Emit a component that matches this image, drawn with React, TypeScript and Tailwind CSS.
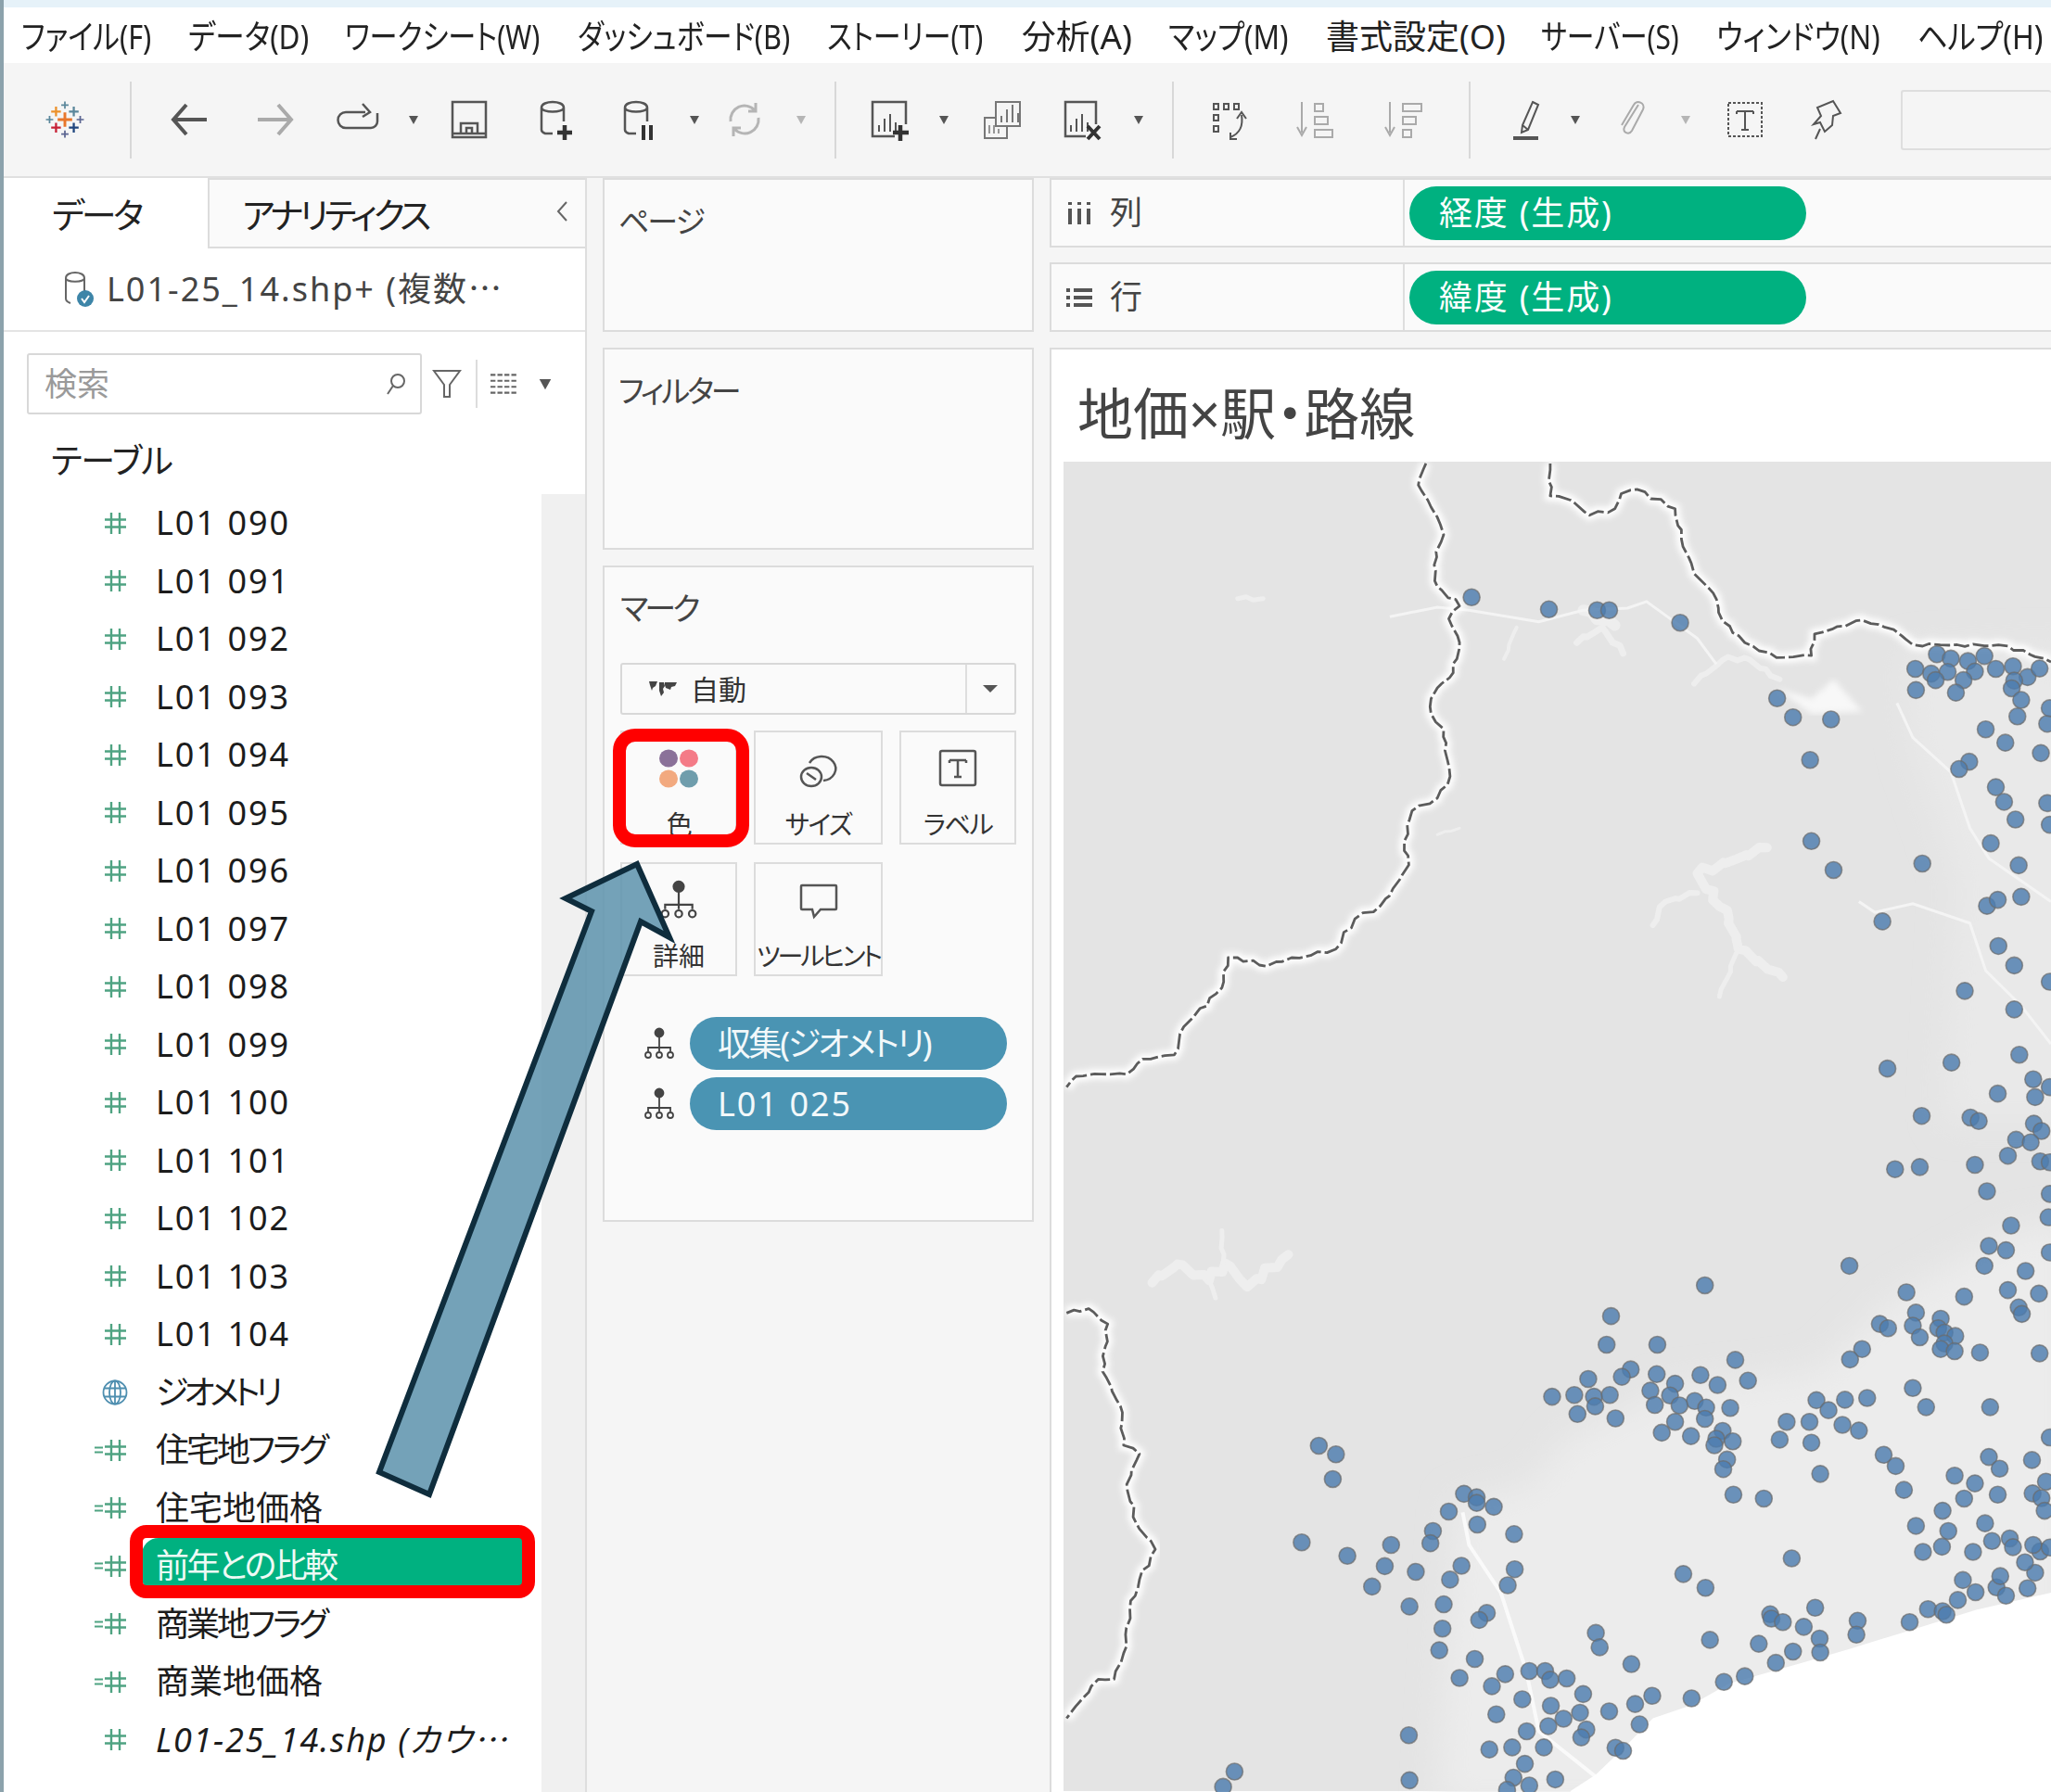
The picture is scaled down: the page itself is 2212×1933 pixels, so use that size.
import type { ReactNode } from 'react';

const menus = [
  { label: 'ファイル(F)', w: 'w-[180px]', sx: 'scale-x-[0.85]' },
  { label: 'データ(D)', w: 'w-[169px]', sx: 'scale-x-[0.876]' },
  { label: 'ワークシート(W)', w: 'w-[251px]', sx: 'scale-x-[0.837]' },
  { label: 'ダッシュボード(B)', w: 'w-[269px]', sx: 'scale-x-[0.853]' },
  { label: 'ストーリー(T)', w: 'w-[210px]', sx: 'scale-x-[0.832]' },
  { label: '分析(A)', w: 'w-[158px]', sx: 'scale-x-[1.02]' },
  { label: 'マップ(M)', w: 'w-[170px]', sx: 'scale-x-[0.876]' },
  { label: '書式設定(O)', w: 'w-[232px]', sx: 'scale-x-[1]' },
  { label: 'サーバー(S)', w: 'w-[189px]', sx: 'scale-x-[0.827]' },
  { label: 'ウィンドウ(N)', w: 'w-[217px]', sx: 'scale-x-[0.874]' },
  { label: 'ヘルプ(H)', w: 'w-[130px]', sx: 'scale-x-[0.894]' },
];

const Ico = ({ children, className = '', color = '#555', sw = 2.5 }: { children: ReactNode; className?: string; color?: string; sw?: number }) => (
  <svg viewBox="0 0 48 48" className={`w-[48px] h-[48px] shrink-0 ${className}`} fill="none" stroke={color} strokeWidth={sw}>
    {children}
  </svg>
);

const Tri = ({ className = '', dim = false }: { className?: string; dim?: boolean }) => (
  <svg viewBox="0 0 16 16" className={`w-[16px] h-[16px] shrink-0 ${className}`}>
    <path d="M3 4h10l-5 9z" fill={dim ? '#b5b5b5' : '#555'} />
  </svg>
);

const Sep = ({ className = '' }: { className?: string }) => <div className={`w-[2px] h-[83px] bg-[#d8d8d8] shrink-0 ${className}`} />;

const Logo = ({ className = '' }: { className?: string }) => {
  const crosses: [number, number, number, string, number][] = [
    [24, 24, 9, '#e8762b', 3.4],
    [24, 6, 4.5, '#5b879b', 2],
    [24, 42, 4.5, '#5b6591', 2],
    [5, 24, 4.5, '#59879b', 2],
    [43, 24, 4.5, '#5b6591', 2],
    [13, 14, 6, '#eb912b', 2.6],
    [35, 14, 6, '#5b879b', 2.6],
    [13, 34, 6, '#c72035', 2.6],
    [35, 34, 6, '#1f457e', 2.6],
  ];
  return (
    <Ico className={className}>
      {crosses.map(([x, y, r, c, w], i) => (
        <path key={i} d={`M${x - r} ${y}h${r * 2}M${x} ${y - r}v${r * 2}`} stroke={c} strokeWidth={w} />
      ))}
    </Ico>
  );
};

const Cyl = () => <path d="M8 11c0-8 24-8 24 0v15M8 11c0 6 24 6 24 0M8 11v24c0 2 1 3 4 4h8" />;

const Bars = ({ x, y }: { x: number; y: number }) => (
  <path d={`M${x} ${y}v-7M${x + 6} ${y}v-14M${x + 12} ${y}v-19M${x + 18} ${y}v-10`} strokeWidth="2" />
);

function Toolbar() {
  return (
    <div className="h-[124px] bg-[#f5f5f5] flex items-center border-b-2 border-[#e0e0e0] shrink-0">
      <Logo className="ml-[42px] scale-[0.87]" />
      <Sep className="ml-[46px]" />
      <Ico className="ml-[38px]" sw={4}><path d="M43 24H8M21 8 7 24l14 16" /></Ico>
      <Ico className="ml-[45px]" color="#aaa" sw={4}><path d="M5 24h35M27 8l14 16-14 16" /></Ico>
      <Ico className="ml-[41px]"><path d="M32 16H11a8 8 0 0 0 0 17h27a7 7 0 0 0 7-7V17M29 7l8 9-8 5" /></Ico>
      <Tri className="ml-[28px]" />
      <Ico className="ml-[28px]"><path d="M6 5h36v38H6zM6 39h36M15 39V28h18v11M21 39v-6h6v6" /></Ico>
      <Ico className="ml-[46px]"><Cyl /><path d="M33 30v16M25 38h16" stroke="#333" strokeWidth="4.5" /></Ico>
      <Ico className="ml-[42px]"><Cyl /><path d="M28 30v16M36 30v16" stroke="#333" strokeWidth="4" /></Ico>
      <Tri className="ml-[27px]" />
      <Ico className="ml-[22px]" color="#b5b5b5" sw={3}><path d="M9 26a15 15 0 0 1 26-12M39 22a15 15 0 0 1-26 12M36 6v9h-8M12 42v-9h8" /></Ico>
      <Tri className="ml-[29px]" dim />
      <Sep className="ml-[28px]" />
      <Ico className="ml-[33px]"><path d="M30 42H6V5h36v24" /><Bars x={13} y={37} /><path d="M36 30v17M28 38h17" stroke="#333" strokeWidth="4.5" /></Ico>
      <Tri className="ml-[27px]" />
      <Ico className="ml-[30px]" color="#777" sw={2}><path d="M18 5h26v26H18zM18 22H6v22h24V31" /><Bars x={24} y={27} /><path d="M11 30v9M16 30v9M21 34v5" strokeWidth="1.5" /></Ico>
      <Ico className="ml-[39px]"><path d="M28 42H6V5h33v24" /><Bars x={12} y={37} /><path d="M30 31l13 14M43 31 30 45" stroke="#333" strokeWidth="4" /></Ico>
      <Tri className="ml-[29px]" />
      <Sep className="ml-[28px]" />
      <Ico className="ml-[35px]" sw={2}>
        <path d="M8 7h5v6H8zM19 7h5v6h-5zM30 7h5v6h-5zM8 19h5v6H8zM8 31h5v6H8z" />
        <path d="M38 19c2 12-2 20-12 24M26 38v7h7M33 23l5-7 5 7" />
      </Ico>
      <Ico className="ml-[47px]" color="#aaa" sw={2}><path d="M8 5v33M3 32l5 9 5-9M22 7h9v8h-9zM22 21h14v8H22zM22 35h19v8H22z" /></Ico>
      <Ico className="ml-[47px]" color="#aaa" sw={2}><path d="M8 5v33M3 32l5 9 5-9M22 7h20v8H22zM22 21h14v8H22zM22 35h9v8h-9z" /></Ico>
      <Sep className="ml-[45px]" />
      <Ico className="ml-[37px]" sw={2}>
        <path d="M30 5l6 3-11 27-7 3 1-8zM19 30l6 5" />
        <rect x="9" y="42" width="27" height="4" fill="#555" stroke="none" />
      </Ico>
      <Tri className="ml-[20px]" />
      <Ico className="ml-[27px]" color="#aaa" sw={2}><path d="M33 8 18 32c-3 6 5 9 8 4l12-23c3-7-7-11-10-5L15 30" /></Ico>
      <Tri className="ml-[28px]" dim />
      <Ico className="ml-[32px]" sw={2}>
        <rect x="6" y="6" width="36" height="36" strokeDasharray="3 2" />
        <path d="M15 15h18M24 15v20M20 35h8M15 15v3M33 15v3" />
      </Ico>
      <Ico className="ml-[40px]" sw={2}><path d="M31 4l8 13-8 3-1 10-8 7-5-10-7 2 8-9-4-9zM17 34l-5 11" /></Ico>
      <div className="ml-[56px] flex-1 h-[65px] border-2 border-[#dedede] rounded-[3px] border-r-0" />
    </div>
  );
}

const Hash = () => (
  <svg viewBox="0 0 25 25" className="w-[25px] h-[25px]" stroke="#4fa382" strokeWidth="2.4" fill="none">
    <path d="M8 1v23M17 1v23M1 8.500h23M1 16.500h23" />
  </svg>
);

const Equal = () => (
  <svg viewBox="0 0 9 10" className="w-[9px] h-[10px] absolute left-[98px]" stroke="#4fa382" strokeWidth="2.200">
    <path d="M0 2.500h9M0 7.500h9" />
  </svg>
);

const Globe = () => (
  <svg viewBox="0 0 28 28" className="w-[28px] h-[28px]" stroke="#4f8fb0" strokeWidth="1.800" fill="none">
    <circle cx="14" cy="14" r="12.500" />
    <ellipse cx="14" cy="14" rx="6" ry="12.500" />
    <path d="M14 1.500v25M2 9.500h24M2 18.500h24" />
  </svg>
);

type Field = { name: string; kind: 'num' | 'calc' | 'geo'; tr: string; italic?: boolean; selected?: boolean };

const fields: Field[] = [
  ...['090', '091', '092', '093', '094', '095', '096', '097', '098', '099', '100', '101', '102', '103', '104'].map((n) => ({
    name: `L01 ${n}`,
    kind: 'num' as const,
    tr: 'tracking-[2px]',
  })),
  { name: 'ジオメトリ', kind: 'geo', tr: 'tracking-[-5px]' },
  { name: '住宅地フラグ', kind: 'calc', tr: 'tracking-[-3px]' },
  { name: '住宅地価格', kind: 'calc', tr: '' },
  { name: '前年との比較', kind: 'calc', tr: 'tracking-[-2.600px]', selected: true },
  { name: '商業地フラグ', kind: 'calc', tr: 'tracking-[-3px]' },
  { name: '商業地価格', kind: 'calc', tr: '' },
  { name: 'L01-25_14.shp (カウ⋯', kind: 'num', tr: 'tracking-[1.700px]', italic: true },
];

function FieldRow({ f }: { f: Field }) {
  return (
    <div className="relative h-[62.5px] flex items-center">
      {f.kind === 'calc' && <Equal />}
      <div className="absolute left-[105px] w-[30px] h-full flex items-center justify-center">{f.kind === 'geo' ? <Globe /> : <Hash />}</div>
      <div
        className={`absolute left-[149px] right-[17px] flex items-center pl-[15px] whitespace-nowrap ${
          f.selected ? 'h-[60px] bg-[#00b180] text-[#eefaf5] rounded-l-[18px]' : 'h-[51px] text-[#1c1c1c]'
        } ${f.italic ? 'italic' : ''} ${f.tr} text-[36px]`}
      >
        {f.name}
      </div>
    </div>
  );
}

function DataPanel() {
  return (
    <div className="w-[629px] shrink-0 bg-white border-r-2 border-[#dedede] flex flex-col">
      <div className="h-[76px] flex shrink-0">
        <div className="w-[220px] pl-[52px] pt-[3px] flex items-center text-[38px] text-[#222] tracking-[-3.500px]">データ</div>
        <div className="flex-1 bg-[#fafafa] border-l-2 border-t-2 border-b-2 border-[#dcdcdc] flex items-center pl-[35px] pt-[3px] text-[38px] text-[#222] tracking-[-4.400px]">
          アナリティクス
          <svg viewBox="0 0 14 24" className="w-[14px] h-[24px] ml-auto mr-[18px] -mt-[8px]" fill="none" stroke="#666" strokeWidth="2">
            <path d="M12 2 3 12l9 10" />
          </svg>
        </div>
      </div>
      <div className="h-[90px] shrink-0 flex items-center border-b-2 border-[#e4e4e4] pl-[64px] text-[36px] text-[#444] tracking-[2px]">
        <svg viewBox="0 0 36 40" className="w-[36px] h-[40px] mr-[11px]" fill="none" stroke="#666" strokeWidth="2">
          <path d="M3 8c0-8 20-8 20 0v14M3 8c0 5 20 5 20 0M3 8v22c0 3 2 4 5 5" />
          <circle cx="24" cy="30" r="9" fill="#3d85a8" stroke="none" />
          <path d="M20 30l3 4 5-7" stroke="#fff" />
        </svg>
        L01-25_14.shp+ (複数⋯
      </div>
      <div className="h-[112px] shrink-0 flex items-center pl-[25px]">
        <div className="w-[426px] h-[66px] border-2 border-[#d8d8d8] rounded-[3px] flex items-center justify-between pl-[17px] pr-[14px] text-[35px] text-[#9a9a9a]">
          検索
          <svg viewBox="0 0 24 28" className="w-[24px] h-[28px]" fill="none" stroke="#666" strokeWidth="2">
            <circle cx="14" cy="11" r="7" />
            <path d="M9 16 3 25" />
          </svg>
        </div>
        <svg viewBox="0 0 32 34" className="w-[32px] h-[34px] ml-[11px]" fill="none" stroke="#666" strokeWidth="2">
          <path d="M2 3h28L19 18v13h-6V18z" />
        </svg>
        <div className="w-[2px] h-[52px] bg-[#dcdcdc] ml-[15px]" />
        <svg viewBox="0 0 28 24" className="w-[30px] h-[26px] ml-[14px]" stroke="#666" strokeWidth="2" strokeDasharray="5 2">
          <path d="M0 3h28M0 9h28M0 15h28M0 21h28" />
        </svg>
        <Tri className="ml-[19px] w-[20px] h-[20px]" />
      </div>
      <div className="h-[63px] shrink-0 flex items-center pl-[51px] pb-[9px] text-[37px] text-[#222] tracking-[-1px]">テーブル</div>
      <div className="flex-1 flex min-h-0">
        <div className="flex-1">
          {fields.map((f) => (
            <FieldRow key={f.name} f={f} />
          ))}
        </div>
        <div className="w-[47px] bg-[#f0f0f0]" />
      </div>
    </div>
  );
}

const Tree = ({ className = '', s = 'w-[36px] h-[36px]' }: { className?: string; s?: string }) => (
  <svg viewBox="0 0 36 36" className={`${s} shrink-0 ${className}`} fill="none" stroke="#444" strokeWidth="1.800">
    <circle cx="18" cy="6" r="4.500" fill="#444" />
    <path d="M18 10v12M6 26v-4h24v4M18 22v4" />
    <circle cx="6" cy="30" r="3" />
    <circle cx="18" cy="30" r="3" />
    <circle cx="30" cy="30" r="3" />
  </svg>
);

const MarkBtn = ({ label, w, icon, tr = 'tracking-[-1.500px]' }: { label: string; w: string; icon: ReactNode; tr?: string }) => (
  <div className={`${w} h-[123px] border-2 border-[#dcdcdc] flex flex-col items-center justify-start pt-[14px]`}>
    <div className="h-[50px] flex items-center justify-center">{icon}</div>
    <div className={`text-[28px] leading-[36px] mt-[17px] text-[#333] whitespace-nowrap ${tr}`}>{label}</div>
  </div>
);

function MiddleColumn() {
  return (
    <div className="w-[465px] shrink-0 ml-[17px] flex flex-col gap-[17px]">
      <div className="h-[166px] border-2 border-[#dcdcdc] bg-[#fafafa] pl-[15px] pt-[20px] text-[33px] text-[#444] tracking-[-2px]">ページ</div>
      <div className="h-[218px] border-2 border-[#dcdcdc] bg-[#fafafa] pl-[15px] pt-[20px] text-[33px] text-[#444] tracking-[-3px]">フィルター</div>
      <div className="h-[708px] border-2 border-[#dcdcdc] bg-[#fafafa] px-[17px] flex flex-col">
        <div className="h-[103px] shrink-0 flex items-start pt-[19px] text-[34px] text-[#444] tracking-[-4px]">マーク</div>
        <div className="h-[56px] w-[427px] border-2 border-[#d8d8d8] rounded-[3px] flex items-center shrink-0">
          <svg viewBox="0 0 32 20" className="w-[32px] h-[20px] ml-[28px]" fill="#444">
            <path d="M1 2h9l-2 5-3 2-1 3-2-6zM12 3h5l1 4-2 3 1 4-3 4-2-6zM18 3h13l-2 4-4 1-1 3-5-2-1-3z" />
          </svg>
          <span className="ml-[14px] text-[30px] text-[#333]">自動</span>
          <div className="w-[2px] h-full bg-[#dedede] ml-[236px]" />
          <svg viewBox="0 0 18 10" className="w-[18px] h-[10px] ml-[16px]"><path d="M1 1h16l-8 8z" fill="#555" /></svg>
        </div>
        <div className="flex gap-[18px] mt-[17px] shrink-0">
          <MarkBtn
            label="色"
            w="w-[126px]"
            icon={
              <svg viewBox="0 0 44 44" className="w-[44px] h-[44px]">
                <ellipse cx="11" cy="11" rx="10" ry="9.500" fill="#8a7199" />
                <ellipse cx="33" cy="11" rx="10" ry="9.500" fill="#f47b87" />
                <ellipse cx="11" cy="33" rx="10" ry="9.500" fill="#f2a97f" />
                <ellipse cx="33" cy="33" rx="10" ry="9.500" fill="#6f9dac" />
              </svg>
            }
          />
          <MarkBtn
            label="サイズ"
            w="w-[139px]"
            icon={
              <svg viewBox="0 0 44 44" className="w-[44px] h-[44px]" fill="none" stroke="#555" strokeWidth="2.500">
                <path d="M12 16a15 13 0 1 1 15 19" />
                <ellipse cx="14" cy="31" rx="11" ry="10" />
                <path d="M9 27l10 7" />
              </svg>
            }
          />
          <MarkBtn
            label="ラベル"
            w="w-[126px]"
            icon={
              <svg viewBox="0 0 44 44" className="w-[44px] h-[44px]" fill="none" stroke="#555" strokeWidth="2.500">
                <rect x="3" y="3" width="38" height="37" rx="2" />
                <path d="M13 13h18M22 13v18M18 31h8M13 13v3M31 13v3" />
              </svg>
            }
          />
        </div>
        <div className="flex gap-[18px] mt-[19px] shrink-0">
          <MarkBtn label="詳細" w="w-[126px]" tr="" icon={<Tree s="w-[44px] h-[44px]" />} />
          <MarkBtn
            label="ツールヒント"
            w="w-[139px]"
            tr="tracking-[-3px]"
            icon={
              <svg viewBox="0 0 44 44" className="w-[44px] h-[44px]" fill="none" stroke="#555" strokeWidth="2.500">
                <path d="M4 6h36a1 1 0 0 1 1 1v24a1 1 0 0 1-1 1H24l-7 8-2-8H4a1 1 0 0 1-1-1V7a1 1 0 0 1 1-1z" />
              </svg>
            }
          />
        </div>
        <div className="flex items-center mt-[44px] shrink-0 pl-[24px]">
          <Tree />
          <div className="ml-[15px] w-[342px] h-[57px] rounded-full bg-[#4a94b3] text-[#f2f8fa] text-[36px] tracking-[-2.400px] flex items-center pl-[30px] whitespace-nowrap">収集(ジオメトリ)</div>
        </div>
        <div className="flex items-center mt-[8px] shrink-0 pl-[24px]">
          <Tree />
          <div className="ml-[15px] w-[342px] h-[57px] rounded-full bg-[#4a94b3] text-[#f2f8fa] text-[36px] tracking-[2px] flex items-center pl-[30px]">L01 025</div>
        </div>
      </div>
    </div>
  );
}

const Shelf = ({ icon, label, pill }: { icon: ReactNode; label: string; pill: string }) => (
  <div className="h-[75px] border-t-2 border-b-2 border-l-2 border-[#dcdcdc] bg-[#fafafa] flex items-center">
    <div className="w-[381px] h-full flex items-center pl-[16px] border-r-2 border-[#dedede] text-[35px] text-[#444]">
      {icon}
      <span className="ml-[19px]">{label}</span>
    </div>
    <div className="ml-[5px] w-[428px] h-[58px] rounded-full bg-[#00b180] text-white text-[36px] tracking-[1.800px] flex items-center pl-[32px]">{pill}</div>
  </div>
);

// 参照画像の拡大図の座標 → ページ座標
const z5 = ([x, y]: number[]) => [1140 + x / 1.4627, 480 + y / 2.148];
const z6 = ([x, y]: number[]) => [1140 + x / 1.4627, 1200 + y / 2.139];
const line = (pts: number[][], f: (p: number[]) => number[]) =>
  pts
    .map(f)
    .map(([x, y], i) => `${i ? 'L' : 'M'}${x.toFixed(1)} ${y.toFixed(1)}`)
    .join('');

// 県境のがたつき: 線分を細かく割って少しずらす
const wobble = (pts: number[][], f: (p: number[]) => number[], amp = 1.8) => {
  const page = pts.map(f);
  const out: number[][] = [];
  page.forEach((p, i) => {
    if (i === 0) {
      out.push(p);
      return;
    }
    const q = page[i - 1];
    const n = Math.max(1, Math.round(Math.hypot(p[0] - q[0], p[1] - q[1]) / 9));
    for (let k = 1; k <= n; k++) {
      const t = k / n;
      const a = i * 7.3 + k * 2.1;
      const j = k === n ? 0 : amp;
      out.push([q[0] + (p[0] - q[0]) * t + Math.sin(a) * j, q[1] + (p[1] - q[1]) * t + Math.cos(a * 1.7) * j]);
    }
  });
  return line(out, (p) => p);
};

const dots5 = [[654,355],[776,383],[852,385],[871,385],[983,414],[1136,589],[1161,633],[1221,638],[1188,732],[1354,521],[1355,570],[1379,532],[1388,487],[1410,497],[1405,528],[1386,547],[1437,503],[1448,527],[1430,547],[1418,576],[1463,491],[1481,521],[1508,515],[1531,540],[1550,520],[1510,548],[1506,566],[1521,593],[1515,631],[1562,648],[1566,612],[1465,661],[1496,692],[1552,716],[1439,736],[1423,753],[1481,795],[1494,829],[1562,832],[1512,870],[1566,882],[1473,925],[1517,976],[1190,920],[1225,987],[1365,972],[1302,1106],[1467,1070],[1484,1056],[1521,1049],[1485,1163],[1510,1208],[1566,1246],[1432,1267],[1510,1310],[1518,1415],[1411,1433],[1310,1447],[1540,1472],[1566,1490],[1484,1505],[1543,1513]];

const dots6 = [[1364,10],[1441,14],[1454,22],[1541,28],[1553,45],[1513,65],[1536,71],[1500,102],[1551,115],[1566,117],[1448,123],[1361,128],[1322,133],[1467,184],[1566,190],[1564,244],[1505,263],[1470,310],[1497,320],[1566,325],[1463,356],[1528,368],[1250,356],[1500,412],[1549,420],[1431,427],[1340,417],[1022,401],[874,472],[1517,452],[1522,467],[1355,464],[1394,478],[1298,490],[1311,500],[1350,494],[1390,500],[1400,510],[1361,521],[1417,518],[1400,535],[1394,548],[1416,553],[1456,556],[1550,558],[1270,548],[1251,572],[867,538],[947,538],[1070,573],[905,595],[891,612],[838,617],[946,606],[1015,608],[1090,621],[975,628],[1042,631],[936,644],[816,654],[847,658],[872,654],[781,658],[849,680],[967,655],[1006,668],[982,678],[943,677],[1024,683],[1062,684],[821,698],[881,708],[1022,709],[975,716],[1350,638],[1371,682],[1472,682],[1198,666],[1243,665],[1278,661],[1217,689],[1151,716],[1187,716],[1239,723],[1265,736],[1140,757],[1190,764],[954,741],[1000,749],[1050,737],[1040,755],[1066,761],[1037,770],[1057,803],[1051,825],[1204,836],[1304,792],[1323,818],[1566,752],[1470,797],[1487,824],[1538,804],[1416,840],[1448,858],[1336,873],[1431,893],[1484,884],[1539,881],[1553,892],[1560,854],[1558,921],[1067,884],[1115,893],[413,771],[440,791],[435,848],[642,882],[662,890],[662,903],[689,912],[618,923],[663,953],[593,968],[721,975],[589,996],[386,994],[527,1000],[458,1025],[638,1048],[517,1049],[566,1062],[722,1056],[620,1080],[711,1093],[497,1096],[556,1142],[610,1137],[678,1157],[666,1173],[608,1193],[603,1243],[659,1263],[635,1307],[707,1298],[745,1291],[770,1291],[778,1311],[804,1308],[686,1326],[830,1344],[734,1356],[779,1371],[871,1384],[912,1367],[939,1348],[1001,1354],[693,1391],[825,1387],[799,1401],[775,1418],[835,1426],[741,1430],[827,1444],[919,1414],[718,1467],[768,1467],[682,1472],[881,1468],[893,1475],[738,1505],[720,1537],[786,1541],[555,1439],[556,1543],[280,1523],[262,1558],[745,1555],[710,1565],[850,1203],[856,1236],[906,1275],[1030,1219],[988,1067],[1023,1099],[1159,1031],[1125,1160],[1127,1170],[1145,1178],[1178,1189],[1196,1145],[1263,1175],[1261,1207],[1203,1216],[1204,1248],[1161,1246],[1107,1228],[1134,1272],[1085,1303],[1052,1316],[1345,1178],[1374,1148],[1397,1153],[1403,1161],[1421,1127],[1429,1081],[1449,1109],[1482,1098],[1488,1072],[1497,1117],[1531,1100],[1543,1064],[1527,1040],[1551,1015],[1540,1000],[1566,1006],[1503,985],[1508,1005],[1475,991],[1464,950],[1445,1016],[1397,921],[1355,956],[1406,968],[1396,1004],[1366,1016]];

const borders = [
  wobble([[582,45],[570,95],[585,130],[600,170],[610,210],[598,250],[595,280],[600,330],[635,375],[618,405],[635,460],[625,530],[600,565],[590,590],[590,625],[610,660],[612,710],[620,770],[600,820],[560,850],[548,920],[555,975],[530,1030],[510,1070],[470,1100],[440,1170],[400,1185],[370,1190],[330,1210],[285,1190],[270,1190],[260,1260],[200,1350],[185,1415],[135,1425],[110,1460],[70,1460],[30,1465],[15,1490]], z5),
  wobble([[778,45],[778,120],[810,130],[840,165],[880,150],[890,115],[915,105],[975,150],[985,220],[1005,300],[1035,345],[1050,410],[1085,460],[1135,495],[1190,490],[1195,440],[1270,408],[1320,430],[1350,465],[1420,465],[1500,468],[1568,505]], z5),
  wobble([[15,465],[50,455],[80,490],[72,600],[100,680],[105,770],[130,790],[110,860],[125,950],[155,1010],[130,1080],[115,1150],[105,1250],[90,1310],[65,1310],[15,1400]], z6),
];

const rivers = [
  line([[525,400],[600,378],[650,385],[760,412],[830,385],[900,380],[930,365],[1010,450],[1040,510]], z5),
  line([[1325,600],[1350,680],[1410,760],[1440,890],[1470,960],[1568,1060]], z5),
  line([[1265,1060],[1290,1085],[1350,1065],[1440,1110],[1465,1220],[1520,1300],[1568,1390]], z5),
];

// ダム湖はがたつかせた線で描く
const lakes = [
  { d: wobble([[1120,935],[1010,995],[1060,1100],[1075,1170],[1145,1235]], z5, 3.5), w: 10 },
  { d: wobble([[1075,1170],[1045,1280]], z5, 2), w: 5 },
  { d: wobble([[1010,1040],[960,1060],[940,1115]], z5, 2.5), w: 6 },
  { d: wobble([[820,460],[860,425],[893,485]], z5, 2.5), w: 7 },
  { d: wobble([[830,385],[880,420]], z5, 2.5), w: 12 },
  { d: wobble([[725,425],[705,498]], z5, 1.5), w: 4 },
  { d: wobble([[1005,555],[1050,500],[1085,495],[1140,545]], z5, 2.5), w: 6 },
  { d: wobble([[150,395],[190,352],[240,390],[265,350],[300,405],[365,330]], z6, 3.5), w: 10 },
  { d: wobble([[260,275],[262,350]], z6, 1.5), w: 5 },
  { d: wobble([[240,390],[250,430]], z6, 1.5), w: 5 },
  { d: wobble([[285,358],[325,358]], z5, 2), w: 5 },
  { d: wobble([[600,905],[635,890]], z5, 1), w: 3 },
];
const bay = line([[1135,565],[1190,590],[1225,545],[1270,620],[1190,625]], z5) + 'Z';

const coast = line([[810,1568],[850,1530],[900,1460],[940,1400],[1000,1370],[1060,1320],[1180,1270],[1250,1240],[1350,1195],[1450,1150],[1568,1110],[1600,1110],[1600,1600],[810,1600]], z6) + 'Z';
const plain = line([[600,1600],[630,900],[750,860],[800,760],[960,640],[1200,600],[1320,430],[1500,280],[1600,250],[1600,1200],[900,1600]], z6) + 'Z';
const north = line([[1340,480],[1600,470],[1600,1570],[1400,1570],[1420,1000],[1350,700]], z5) + 'Z';

function MapView() {
  return (
    <svg viewBox="1147 499 1065 1434" className="w-full h-full block">
      <defs>
        <filter id="soft" x="-20%" y="-20%" width="140%" height="140%"><feGaussianBlur stdDeviation="18" /></filter>
        <filter id="glow" x="-5%" y="-5%" width="110%" height="110%"><feGaussianBlur stdDeviation="3" /></filter>
      </defs>
      <rect x="1147" y="499" width="1065" height="1434" fill="#e4e4e4" />
      <path d={plain} fill="#ececec" filter="url(#soft)" />
      <path d={north} fill="#e9e9e9" filter="url(#soft)" />
      {lakes.map((l, i) => <path key={i} d={l.d} fill="none" stroke="#eeeeee" strokeWidth={l.w} strokeLinejoin="round" strokeLinecap="round" />)}
      {rivers.map((d, i) => <path key={i} d={d} fill="none" stroke="#f4f4f4" strokeWidth="3" />)}
      <path d={bay} fill="#f8f8f8" filter="url(#glow)" />
      <path d={line([[640,925],[650,1000],[700,1110],[740,1290],[760,1430],[850,1535]], z6)} fill="none" stroke="#fafafa" strokeWidth="4" />
      <path d={coast} fill="#ffffff" />
      {borders.map((d, i) => (
        <g key={i} fill="none">
          <path d={d} stroke="#ffffff" strokeWidth="11" filter="url(#glow)" />
          <path d={d} stroke="#5c5c5c" strokeWidth="2.800" strokeDasharray="17 4" strokeLinejoin="round" />
        </g>
      ))}
      {dots5.map(z5).concat(dots6.map(z6)).map(([x, y], i) => (
        <circle key={i} cx={x} cy={y} r="9" fill="#4d7cae" fillOpacity="0.82" stroke="#6b6b6b" strokeOpacity="0.7" strokeWidth="1.600" />
      ))}
    </svg>
  );
}

function VizColumn() {
  return (
    <div className="flex-1 ml-[17px] flex flex-col gap-[16px] min-w-0">
      <Shelf
        label="列"
        pill="経度 (生成)"
        icon={
          <svg viewBox="0 0 28 24" className="w-[28px] h-[24px]" fill="#555">
            <path d="M2 7h4v17H2zM12 7h4v17h-4zM22 7h4v17h-4zM2 0h4v3H2zM12 0h4v3h-4zM22 0h4v3h-4z" />
          </svg>
        }
      />
      <Shelf
        label="行"
        pill="緯度 (生成)"
        icon={
          <svg viewBox="0 0 28 24" className="w-[28px] h-[24px]" fill="#555">
            <path d="M0 2h4v4H0zM8 2h20v4H8zM0 10h4v4H0zM8 10h20v4H8zM0 18h4v4H0zM8 18h20v4H8z" />
          </svg>
        }
      />
      <div className="flex-1 mt-[1px] border-t-2 border-l-2 border-[#dcdcdc] bg-white flex flex-col min-h-0">
        <div className="h-[120px] shrink-0 flex items-center pl-[28px] pt-[17px] text-[60px] text-[#444]">地価×駅・路線</div>
        <div className="flex-1 ml-[13px] min-h-0">
          <MapView />
        </div>
      </div>
    </div>
  );
}

function Annotations() {
  return (
    <>
      <div className="absolute left-[661px] top-[786px] w-[147px] h-[128px] border-[14px] border-[#ff0000] rounded-[24px]" />
      <div className="absolute left-[140px] top-[1645px] w-[437px] h-[79px] border-[14px] border-[#ff0000] rounded-[18px]" />
      <svg viewBox="0 0 2212 1933" className="absolute inset-0 w-[2212px] h-[1933px] pointer-events-none">
        <path
          d="M687 932 722 1011 691 994 463 1612 409 1588 638 983 610 969Z"
          fill="#5f94ae"
          fillOpacity="0.87"
          stroke="#0f2d3d"
          strokeWidth="6"
          strokeLinejoin="miter"
        />
      </svg>
    </>
  );
}

export default function App() {
  return (
    <div className="relative w-[2212px] h-[1933px] overflow-hidden flex bg-[#f5f5f5] font-['Noto_Sans','Noto_Sans_CJK_JP',sans-serif] [font-feature-settings:'palt']">
      <div className="w-[4px] shrink-0 bg-[#8ca2ac]" />
      <div className="flex-1 flex flex-col min-w-0">
        <div className="h-[8px] bg-[#e6f2f9] shrink-0" />
        <div className="h-[60px] bg-white flex items-center pl-[19px] pt-[4px] shrink-0 text-[36px] text-[#222]">
          {menus.map((m) => (
            <div key={m.label} className={`${m.w} shrink-0 whitespace-nowrap`}>
              <span className={`inline-block origin-left ${m.sx}`}>{m.label}</span>
            </div>
          ))}
        </div>
        <Toolbar />
        <div className="flex-1 flex min-h-0">
          <DataPanel />
          <MiddleColumn />
          <VizColumn />
        </div>
      </div>
      <Annotations />
    </div>
  );
}
